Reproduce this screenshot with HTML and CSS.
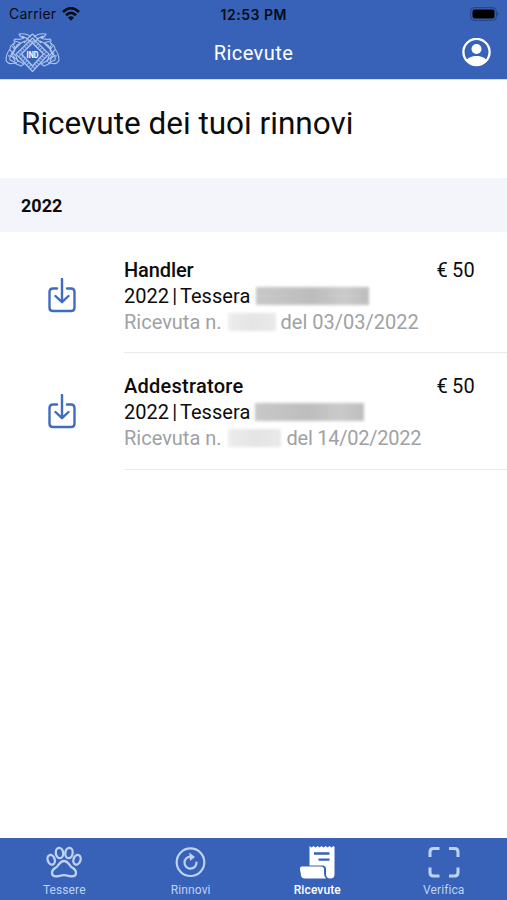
FILE: index.html
```html
<!DOCTYPE html>
<html lang="it">
<head>
<meta charset="utf-8">
<title>Ricevute</title>
<link rel="stylesheet" href="styles.css">
</head>
<body>
<svg class="defs" width="0" height="0" aria-hidden="true">
  <symbol id="download" viewBox="0 0 28 35">
    <path d="M9 10.500H5Q1.500 10.500 1.500 14V29.500Q1.500 33 5 33H23Q26.500 33 26.500 29.500V14Q26.500 10.500 23 10.500H19M14 1V23.500M7.500 18L14 24.200L20.500 18" fill="none" stroke="currentColor" stroke-width="2.400" stroke-linecap="round" stroke-linejoin="round"/>
  </symbol>
</svg>
<div class="app">
  <header class="top">
    <div class="status">
      <div class="carrier"><span class="carrier-name">Carrier</span>
        <svg width="18" height="14" viewBox="0 0 18 14"><g fill="none" stroke="#050b18" stroke-width="2.700"><path d="M1 5Q9-2.600 17 5"/><path d="M4 8.300Q9 3.500 14 8.300"/></g><path d="M6 10.500Q9 7.800 12 10.500L9 13.700Z" fill="#050b18"/></svg>
      </div>
      <span class="clock">12:53 PM</span>
      <svg class="battery" width="30" height="14" viewBox="0 0 30 14"><rect x=".7" y=".7" width="25.600" height="12.600" rx="3.500" fill="none" stroke="#1c3670" stroke-opacity=".75"/><rect x="2.500" y="2.500" width="22" height="9" rx="2" fill="#000"/><path d="M27.500 5Q29.500 7 27.500 9Z" fill="#1c3670"/></svg>
    </div>
    <div class="nav">
      <svg class="crest" width="56" height="42" viewBox="0 0 56 42">
        <g fill="none" stroke="#adc5ef" stroke-width="1.100" stroke-linejoin="round">
          <path id="wing" d="M26 5Q22 1 14 2Q15 5 19 6Q15 8 10 7Q8 9 10 11Q5 13 5 17Q1 22 1 28Q3 33 9 31L16 34L19 32Q10 28 7 22Q9 18 12 13L20 9M8 12Q12 17 8 21Q4 24 5 28L12 31M5 18L11 24L13 30M10 9L16 11L9 18M3 24Q8 23 10 29M7 14L10 18L6 22M17 4L23 7L19 11"/>
          <use href="#wing" transform="matrix(-1 0 0 1 55 0)"/>
          <path d="M27.500 2L33 7L29 10H26L22 7Z"/>
          <path d="M27.500 6L44 22L27.500 39.500L11 22Z"/>
          <path d="M27.500 11L38.500 22L27.500 34L16.500 22Z" stroke-width="1.300"/>
          <path d="M27.500 8.500L41 22L27.500 36.500L14 22Z" stroke-width="3.500" stroke-dasharray="1.500 1.300" stroke-opacity=".65"/>
        </g>
        <text x="27.500" y="25.500" text-anchor="middle" class="crest-text" textLength="12" lengthAdjust="spacingAndGlyphs">IND</text>
      </svg>
      <h1 class="nav-title">Ricevute</h1>
      <svg class="profile" width="30" height="30" viewBox="0 0 30 30"><circle cx="14.500" cy="14" r="13.100" fill="none" stroke="#fff" stroke-width="2.300"/><circle cx="14.500" cy="11" r="5" fill="#fff"/><path d="M4.500 22.500C7 16.500 22 16.500 24.500 22.500Q20.500 27.500 14.500 27.500T4.500 22.500Z" fill="#fff"/></svg>
    </div>
  </header>
  <main class="content">
    <h2 class="title"><span>Ricevute dei tuoi rinnovi</span></h2>
    <div class="year"><span>2022</span></div>
    <article class="receipt">
      <svg class="download" width="28" height="35"><use href="#download"/></svg>
      <div class="details">
        <div class="text">
          <div class="name handler">Handler</div>
          <div class="line"><span class="card">2022 | Tessera</span><span class="mask dark m1"></span></div>
          <div class="line muted"><span class="num">Ricevuta n.</span><span class="mask light m2"></span><span class="date">del 03/03/2022</span></div>
        </div>
        <div class="price">€ 50</div>
      </div>
    </article>
    <article class="receipt">
      <svg class="download" width="28" height="35"><use href="#download"/></svg>
      <div class="details">
        <div class="text">
          <div class="name trainer">Addestratore</div>
          <div class="line"><span class="card">2022 | Tessera</span><span class="mask dark m3"></span></div>
          <div class="line muted"><span class="num">Ricevuta n.</span><span class="mask light m4"></span><span class="date short">del 14/02/2022</span></div>
        </div>
        <div class="price">€ 50</div>
      </div>
    </article>
  </main>
  <nav class="tabs">
    <div class="tab">
      <svg width="38" height="34" viewBox="0 0 38 34"><g fill="none" stroke="currentColor" stroke-width="2.300"><ellipse cx="14.500" cy="8" rx="3.700" ry="5.200" transform="rotate(-8 14.500 8)"/><ellipse cx="24" cy="8" rx="3.700" ry="5.200" transform="rotate(8 24 8)"/><ellipse cx="6.200" cy="14.800" rx="3.500" ry="5" transform="rotate(-18 6.200 14.800)"/><ellipse cx="32" cy="14.800" rx="3.500" ry="5" transform="rotate(18 32 14.800)"/><path d="M19 16C14.800 16 14.200 20 11.800 21.800C9.500 23.700 7 24.500 7 27.500C7 29.900 8.600 31.300 11 31.300C14 31.300 15.500 30.200 19 30.200S24 31.300 27 31.300C29.400 31.300 31 29.900 31 27.500C31 24.500 28.500 23.700 26.200 21.800C23.800 20 23.200 16 19 16Z"/></g></svg>
      <span class="label">Tessere</span>
    </div>
    <div class="tab">
      <svg width="38" height="34" viewBox="0 0 38 34"><g fill="none" stroke="currentColor"><circle cx="18.500" cy="17.200" r="13.800" stroke-width="2.200"/><path d="M19 11.700A6 6 0 1 0 24.500 17.500" stroke-width="2.200" stroke-linecap="round"/></g><path d="M17.300 7.500L23 12L18 16Z" fill="currentColor"/></svg>
      <span class="label">Rinnovi</span>
    </div>
    <div class="tab active">
      <svg width="38" height="34" viewBox="0 0 38 34"><path d="M11.500 1L13.500 2.500L15.500 1L17.500 2.500L19.500 1L21.500 2.500L23.500 1L25.500 2.500L27.500 1L29.500 2.500L31.500 1L33.500 2.500L35.500 1L36.500 2V29Q36.500 33.500 32.500 33.500Q28 33.500 28 29V24Q28 20.500 24.500 20.500H11.500Z" fill="#fff"/><path d="M4 21.500H23Q26 21.500 26 24.500V28.500Q26 31.500 28 33.500H7Q4 33.500 3 31Q3 29 2.500 27Q.8 21.500 4 21.500Z" fill="#fff"/><path d="M16 8.500H31.500M20.500 14.700H31.500" stroke="#3862b7" stroke-width="2.300"/></svg>
      <span class="label">Ricevute</span>
    </div>
    <div class="tab">
      <svg width="38" height="34" viewBox="0 0 38 34"><path d="M5 12V7Q5 3.500 8.500 3.500H14.500M24 3.500H29.500Q33 3.500 33 7V12M33 22.500V27.500Q33 31 29.500 31H24M14.500 31H8.500Q5 31 5 27.500V22.500" fill="none" stroke="currentColor" stroke-width="3"/></svg>
      <span class="label">Verifica</span>
    </div>
  </nav>
</div>
</body>
</html>
```
FILE: styles.css
```css
* { box-sizing: border-box; }
body { margin: 0; background: #fff; color: #0c0c0c; font-family: Roboto, "Liberation Sans", sans-serif; }
.defs { display: block; }
.app { width: 507px; height: 900px; display: flex; flex-direction: column; overflow: hidden; }
.top { height: 79px; flex: none; background: #3862b7; box-shadow: 0 1px #cfdcf3; }
.status { height: 28px; display: grid; grid-template-columns: 1fr auto 1fr; align-items: center; padding: 0 7px 0 7px; font-family: Inter, sans-serif; color: #050b18; }
.carrier { display: flex; align-items: center; gap: 6px; padding-left: 2px; margin-top: -1px; }
.carrier-name { font-size: 14px; letter-spacing: .2px; }
.clock { font-size: 14px; font-weight: 600; letter-spacing: .5px; margin-right: -.5px; }
.battery { justify-self: end; margin-top: -1px; }
.nav { height: 50px; display: grid; grid-template-columns: 1fr auto 1fr; align-items: center; padding: 0 15px 0 5px; }
.crest { margin-top: -1px; }
.crest-text { fill: #fff; font: 700 9px Roboto, sans-serif; }
.nav-title { margin: 0 -5px 0 5px; font-size: 20px; letter-spacing: .45px; font-weight: 400; color: #fff; }
.profile { justify-self: end; }
.content { flex: 1; }
.title { margin: 0; height: 99px; padding: 26px 21px 0; font-size: 31.500px; line-height: 38px; font-weight: 400; white-space: nowrap; }
.year { height: 54px; display: flex; align-items: center; padding-left: 21px; background: #f4f5fa; font-size: 18px; font-weight: 700; }
.receipt { height: 117px; display: flex; }
.receipt:nth-of-type(1) { height: 121px; padding-top: 4px; }
.download { flex: none; margin: 42px 48px 0; color: #3f6bc0; }
.details { flex: 1; display: flex; justify-content: space-between; padding: 21px 32px 0 0; border-bottom: 1px solid #e8e9eb; font-size: 20px; line-height: 26px; white-space: nowrap; }
.receipt:nth-of-type(2) .details { padding-top: 20px; }
.receipt:nth-of-type(2) .download { margin-top: 41px; }
.name { font-weight: 500; }
.handler { letter-spacing: -.1px; }
.trainer { letter-spacing: .25px; }
.card { word-spacing: -1.900px; letter-spacing: .05px; }
.date.short { letter-spacing: -.25px; }
.line { display: flex; align-items: center; height: 26px; }
.muted { color: #a0a1a4; }
.mask { height: 18px; filter: blur(1.500px); }
.dark { background: linear-gradient(90deg, #c8c8c8, #bdbdbd 50%, #cacaca 78%, #bebebe); }
.light { background: linear-gradient(90deg, #ededed, #e4e4e5 50%, #e9e9ea); }
.m1 { width: 113px; margin-left: 6px; }
.m2 { width: 48px; margin: 0 5px 0 6px; }
.m3 { width: 109px; margin-left: 5px; }
.m4 { width: 53px; margin: 0 6px; }
.price { word-spacing: -1px; letter-spacing: .2px; }
.tabs { height: 62px; flex: none; display: grid; grid-template-columns: repeat(4, 126.500px); background: #3862b7; color: #bfd2f6; }
.tab { display: flex; flex-direction: column; align-items: center; padding: 7px 0 0 2px; }
.label { margin-top: 3px; font-size: 12px; line-height: 17px; font-weight: 400; letter-spacing: .1px; }
.active { color: #fff; }
.active .label { font-weight: 500; }
```
